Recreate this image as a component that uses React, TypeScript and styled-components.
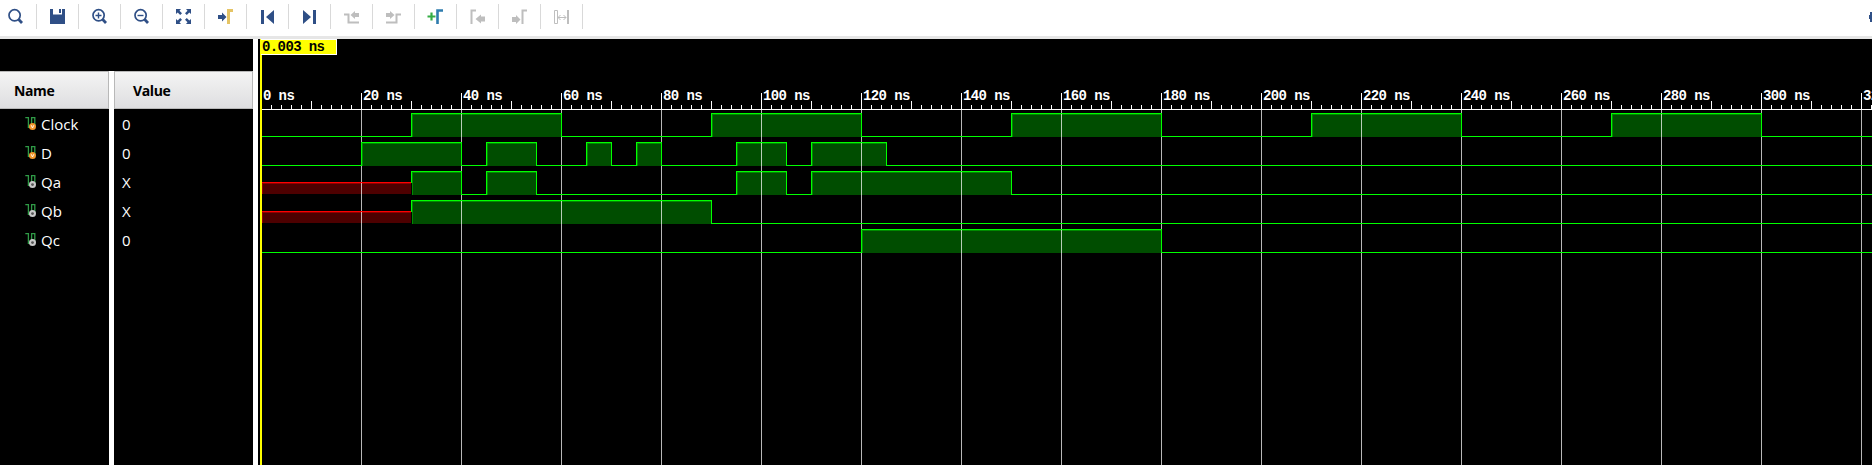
import React from "react";
import styled, { createGlobalStyle } from "styled-components";

const Global = createGlobalStyle`
  html, body { margin: 0; padding: 0; background: #000; overflow: hidden; }
  * { box-sizing: border-box; }
`;

const NAVY = "#2f4f86";
const OFF = "#bebebe";

const Window = styled.div`
  width: 1872px;
  height: 465px;
  display: flex;
  flex-direction: column;
  overflow: hidden;
  background: #000;
  font-family: "Open Sans", "Noto Sans", sans-serif;
`;

const Toolbar = styled.div`
  flex: none;
  height: 39px;
  display: flex;
  align-items: flex-start;
  justify-content: space-between;
  background: #fff;
  border-bottom: 3px solid #e6e6e6;
`;

const Tools = styled.div`
  display: flex;
  padding-top: 4px;
`;

const ToolButton = styled.div<{ $first?: boolean }>`
  width: ${(p) => (p.$first ? 37 : 42)}px;
  height: 25px;
  display: flex;
  justify-content: flex-end;
  align-items: center;
  padding-right: 12px;
  border-right: 1px solid #d9d9d9;
`;

const ToolIcon = styled.svg`
  display: block;
  flex: none;
  width: 17px;
  height: 17px;
`;

const Settings = styled.svg`
  display: block;
  width: 3px;
  height: 17px;
  margin-top: 8px;
`;

const Body = styled.div`
  flex: 1;
  display: flex;
  min-height: 0;
`;

const SignalTable = styled.div`
  width: 253px;
  padding-top: 32px;
  display: flex;
`;

const Column = styled.div<{ $width: number }>`
  width: ${(p) => p.$width}px;
`;

const ColumnHead = styled.div<{ $indent: number }>`
  height: 38px;
  padding: 1px 0 0 ${(p) => p.$indent}px;
  display: flex;
  align-items: center;
  border: 1px solid #b8b8b8;
  border-left-width: ${(p) => (p.$indent > 15 ? 1 : 0)}px;
  background: linear-gradient(#f4f4f4, #dedee0);
  color: #000;
  font-size: 14px;
  font-weight: 700;
  letter-spacing: -0.4px;
`;

const Row = styled.div<{ $indent: number }>`
  height: 29px;
  padding: 1px 0 0 ${(p) => p.$indent}px;
  display: flex;
  align-items: center;
  color: #fff;
  font-size: 15px;
  line-height: 20px;
`;

const SignalIcon = styled.svg`
  width: 13px;
  height: 16px;
  margin-right: 3px;
  flex: none;
`;

const Divider = styled.div`
  flex: none;
  width: 5px;
  background: #fff;
`;

const WavePane = styled.div`
  position: relative;
  flex: 1;
  min-width: 0;
`;

const Plot = styled.svg`
  display: block;
  shape-rendering: crispEdges;
  font-family: "Liberation Mono", monospace;
  font-size: 14px;
  font-weight: 700;
  letter-spacing: -0.6px;
`;

const CursorLabel = styled.div`
  position: absolute;
  left: 3px;
  top: 0;
  width: 76px;
  height: 16px;
  padding-left: 1px;
  border: solid #fff;
  border-width: 1px 1px 1px 0;
  background: #ff0;
  color: #000;
  font: 700 14px/14px "Liberation Mono", monospace;
  letter-spacing: -0.6px;
  white-space: pre;
`;

const Lens = ({ sign }: { sign?: "plus" | "minus" }) => (
  <g fill="none" stroke={NAVY}>
    <circle cx="7.6" cy="7.3" r="5.6" strokeWidth="1.7" />
    <path d="M11.7 11.6L15 15" strokeWidth="2.8" />
    {sign && <path d={sign === "plus" ? "M4.5 7.5H10.5M7.5 4.5V10.5" : "M4.5 7.5H10.5"} strokeWidth="1.4" />}
  </g>
);

const tools: React.ReactNode[] = [
  <Lens />,
  <g fill={NAVY}>
    <path d="M1 1h3v5.5h9V1h3V16H1z" />
    <path d="M10 1h2v4h-2z" />
  </g>,
  <Lens sign="plus" />,
  <Lens sign="minus" />,
  <g fill={NAVY}>
    <path d="M1 1h5L4.5 2.7 7 5.2 5.2 7 2.7 4.5 1 6zM16 1v5l-1.7-1.5L11.8 7 10 5.2l2.5-2.5L11 1zM1 16v-5l1.7 1.5L5.2 10 7 11.8l-2.5 2.5L6 16zM16 16h-5l1.5-1.7-2.5-2.5L11.8 10l2.5 2.5L16 11z" />
  </g>,
  <g>
    <path d="M1 7h4V4.5L9.5 9 5 13.5V11H1z" fill={NAVY} />
    <path d="M11.5 16V2.5H16" fill="none" stroke="#e5c465" strokeWidth="3" />
  </g>,
  <path d="M2 2h3v14H2zM15 2v14L7 9z" fill={NAVY} />,
  <path d="M12 2h3v14h-3zM2 2v14l8-7z" fill={NAVY} />,
  <g>
    <path d="M1 6.5H5.5V14.5H16" fill="none" stroke={OFF} strokeWidth="2" />
    <path d="M16 5v4h-4v2L7.5 7 12 3v2z" fill={OFF} />
  </g>,
  <g>
    <path d="M1 14.5H11.5V6.5H16" fill="none" stroke={OFF} strokeWidth="2" />
    <path d="M1 5v4h4v2l4.5-4L5 3v2z" fill={OFF} />
  </g>,
  <g>
    <path d="M0.5 8.5H8.5M4.5 4.5V12.5" fill="none" stroke="#35ad45" strokeWidth="2.2" />
    <path d="M10.5 16V2.5H16" fill="none" stroke="#2e7cae" strokeWidth="2.6" />
  </g>,
  <g>
    <path d="M2.5 16V2.5H7" fill="none" stroke={OFF} strokeWidth="2" />
    <path d="M16 8.5v5h-4v2L6.5 11 12 6.5v2z" fill={OFF} />
  </g>,
  <g>
    <path d="M11.5 16V2.5H16" fill="none" stroke={OFF} strokeWidth="2" />
    <path d="M1 9v5h4v2l4.5-4.5L5 7v2z" fill={OFF} />
  </g>,
  <g fill="none" stroke={OFF}>
    <path d="M1.5 2.5h3v13h-3z" />
    <path d="M15 2V16" strokeWidth="2" />
    <path d="M5 9.5H13M7.5 7L5 9.5L7.5 12M10.5 7L13 9.5L10.5 12" />
  </g>,
];

type Level = "0" | "1" | "X";
interface Signal {
  name: string;
  value: string;
  input?: boolean;
  changes: [number, Level][];
}

const signals: Signal[] = [
  { name: "Clock", value: "0", input: true, changes: [[0, "0"], [30, "1"], [60, "0"], [90, "1"], [120, "0"], [150, "1"], [180, "0"], [210, "1"], [240, "0"], [270, "1"], [300, "0"]] },
  { name: "D", value: "0", input: true, changes: [[0, "0"], [20, "1"], [40, "0"], [45, "1"], [55, "0"], [65, "1"], [70, "0"], [75, "1"], [80, "0"], [95, "1"], [105, "0"], [110, "1"], [125, "0"]] },
  { name: "Qa", value: "X", changes: [[0, "X"], [30, "1"], [40, "0"], [45, "1"], [55, "0"], [95, "1"], [105, "0"], [110, "1"], [150, "0"]] },
  { name: "Qb", value: "X", changes: [[0, "X"], [30, "1"], [90, "0"]] },
  { name: "Qc", value: "0", changes: [[0, "0"], [120, "1"], [180, "0"]] },
];

const WIDTH = 1614;
const HEIGHT = 426;
const END = 324;
const RULER = 70;
const xAt = (t: number) => 3 + t * 5;

/** Translucent body of the high and unknown spans, drawn below the grid. */
const Fill = ({ signal, top }: { signal: Signal; top: number }) => (
  <g>
    {signal.changes.map(([t, level], i) => {
      const x = xAt(t);
      const w = xAt(signal.changes[i + 1]?.[0] ?? END) - x;
      if (level === "0") return null;
      const [y, h, body, rim] =
        level === "X" ? [top + 12, 11, "#4d0000", "#900000"] : [top + 1, 23, "#004d00", "#008a00"];
      return (
        <g key={t}>
          <rect x={x + 1} y={y} width={w - 1} height={h} fill={body as string} />
          <rect x={x + 1} y={y} width={w - 1} height={1} fill={rim as string} />
          <rect x={x + 1} y={y} width={1} height={h} fill={rim as string} />
        </g>
      );
    })}
  </g>
);

/** Bright level line with its rising and falling edges. */
const Line = ({ signal, top }: { signal: Signal; top: number }) => (
  <g fill="#0f0">
    {signal.changes.map(([t, level], i) => {
      const x = xAt(t);
      const w = xAt(signal.changes[i + 1]?.[0] ?? END) - x;
      const prev = signal.changes[i - 1]?.[1];
      if (level === "X") return <rect key={t} x={x} y={top + 11} width={w} height={1} fill="#f00" />;
      return (
        <g key={t}>
          <rect x={x} y={level === "1" ? top : top + 23} width={w} height={1} />
          {prev && <rect x={x} y={top} width={1} height={prev === "X" ? 12 : 24} />}
        </g>
      );
    })}
  </g>
);

const ticks = Array.from({ length: 162 }, (_, i) => i * 2);
const majors = ticks.filter((t) => t % 20 === 0);

export default function App() {
  return (
    <Window>
      <Global />
      <Toolbar>
        <Tools>
          {tools.map((icon, i) => (
            <ToolButton key={i} $first={i === 0}>
              <ToolIcon viewBox="0 0 17 17">{icon}</ToolIcon>
            </ToolButton>
          ))}
        </Tools>
        <Settings viewBox="0 0 3 17">
          <path d="M0 7h1V4h2v10H1v-3H0z" fill={NAVY} />
        </Settings>
      </Toolbar>
      <Body>
        <SignalTable>
          <Column $width={109}>
            <ColumnHead $indent={14}>Name</ColumnHead>
            {signals.map((s) => (
              <Row key={s.name} $indent={25}>
                <SignalIcon viewBox="0 0 13 16">
                  <path d="M0.3 1.6H3.4V11.4H6.6V1.6H9.8V9" fill="none" stroke="#2f9a46" strokeWidth="1.3" />
                  <circle cx="7.5" cy="10.6" r="3.5" fill={s.input ? "#f0962b" : "#c8c8c8"} />
                  {s.input ? (
                    <path d="M6.2 9.2L7.5 12L8.8 9.2" fill="none" stroke="#fff" strokeWidth="0.9" />
                  ) : (
                    <circle cx="7.5" cy="10.6" r="1.4" fill="#555" />
                  )}
                </SignalIcon>
                {s.name}
              </Row>
            ))}
          </Column>
          <Divider />
          <Column $width={139}>
            <ColumnHead $indent={18}>Value</ColumnHead>
            {signals.map((s) => (
              <Row key={s.name} $indent={8}>{s.value}</Row>
            ))}
          </Column>
        </SignalTable>
        <Divider />
        <WavePane>
          <Plot width={WIDTH} height={HEIGHT}>
            {signals.map((s, i) => (
              <Fill key={s.name} signal={s} top={74 + i * 29} />
            ))}
            {majors.slice(1).map((t) => (
              <rect key={t} x={xAt(t)} y={RULER + 1} width={1} height={HEIGHT} fill="#fff" fillOpacity={0.72} />
            ))}
            {signals.map((s, i) => (
              <Line key={s.name} signal={s} top={74 + i * 29} />
            ))}
            <rect x={4} y={RULER} width={WIDTH} height={1} fill="#fff" />
            {ticks.slice(1).map((t) => {
              const h = t % 20 === 0 ? 16 : t % 10 === 0 ? 8 : 4;
              return <rect key={t} x={xAt(t)} y={RULER - h} width={1} height={h} fill="#fff" />;
            })}
            {majors.map((t) => (
              <text key={t} x={xAt(t) + 2} y={61} fill="#fff">{t} ns</text>
            ))}
            <rect x={2} y={0} width={2} height={HEIGHT} fill="#ff0" />
          </Plot>
          <CursorLabel>0.003 ns</CursorLabel>
        </WavePane>
      </Body>
    </Window>
  );
}
